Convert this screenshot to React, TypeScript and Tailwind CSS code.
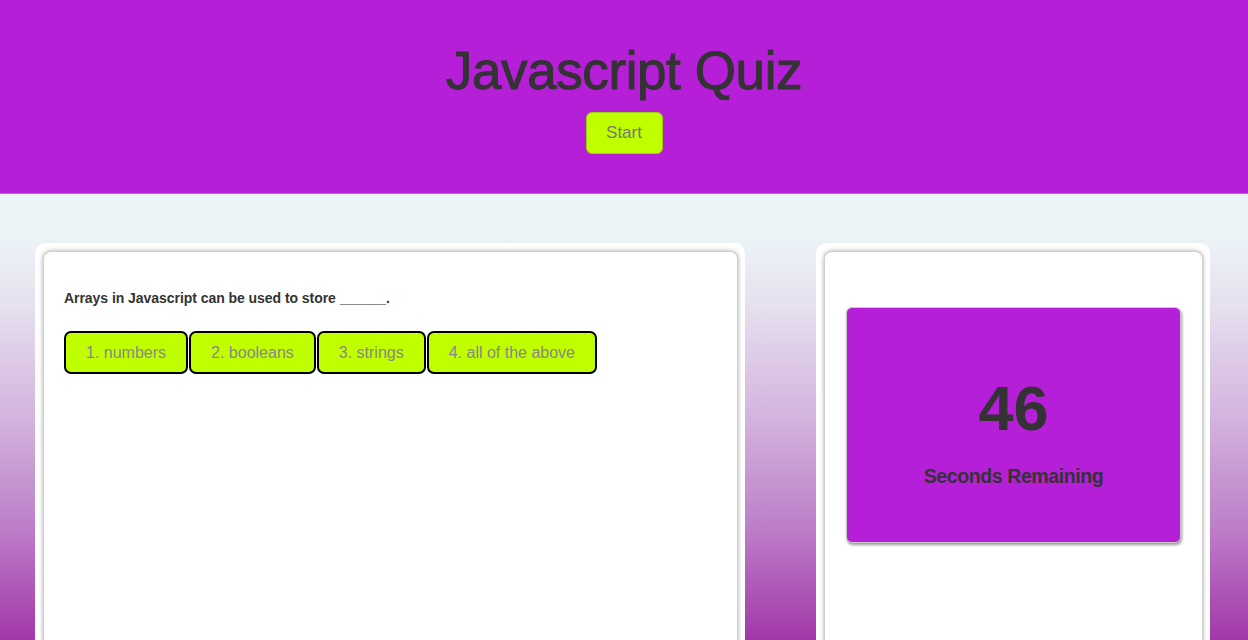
import React, { useState } from 'react';

const answers = ['1. numbers', '2. booleans', '3. strings', '4. all of the above'];

export default function App() {
    const [time] = useState(46);

    return (
        <div className="w-[1248px] h-[640px] overflow-hidden font-['Liberation_Sans',Arial,sans-serif] text-[#333]">
            <header className="h-[194px] bg-[#b61fd8] border-b border-[#c960e0] flex flex-col items-center pt-[39px]">
                <h1 className="text-[53px] leading-[64px] tracking-[-0.4px] text-[#333] [-webkit-text-stroke:1px_#333]">Javascript Quiz</h1>
                <button className="mt-[9px] w-[77px] h-[42px] rounded-[6px] bg-[#bfff00] border border-[#9ccf10] text-[17px] text-[#777]">
                    Start
                </button>
            </header>

            <main className="h-[446px] overflow-hidden bg-[linear-gradient(to_bottom,#ebf3f7_10%,#e6e0ef_25%,#d3b4de_50%,#bd7ec8_75%,#a237a9_100%)] pl-[35px] pt-[49px] flex gap-[71px]">
                <section className="w-[710px] h-[600px] bg-white rounded-[10px] p-[8px] pr-[7px]">
                    <div className="h-full rounded-[8px] border border-[#d0d0d0] shadow-[0_0_4px_rgba(0,0,0,0.35)] bg-white pt-[37px] px-[20px]">
                        <p className="text-[14px] font-bold tracking-[-0.05px] leading-[18px]">
                            Arrays in Javascript can be used to store ______.
                        </p>
                        <div className="mt-[24px] flex gap-[1px]">
                            {answers.map((a) => (
                                <button
                                    key={a}
                                    className="h-[43px] px-[20px] rounded-[7px] border-2 border-black bg-[#bfff00] text-[16px] text-[#888]"
                                >
                                    {a}
                                </button>
                            ))}
                        </div>
                    </div>
                </section>

                <section className="w-[394px] h-[600px] bg-white rounded-[10px] p-[8px] pr-[7px]">
                    <div className="h-full rounded-[8px] border border-[#d0d0d0] shadow-[0_0_4px_rgba(0,0,0,0.35)] bg-white pt-[55px] px-[21px]">
                        <div className="h-[236px] rounded-[6px] bg-[#b61fd8] border border-[#c9c9c9] shadow-[1px_2px_3px_rgba(0,0,0,0.4)] flex flex-col items-center pt-[62px]">
                            <div className="text-[63px] font-bold leading-[76px]">{time}</div>
                            <div className="mt-[16px] text-[19.5px] font-bold tracking-[-0.4px]">Seconds Remaining</div>
                        </div>
                    </div>
                </section>
            </main>
        </div>
    );
}
